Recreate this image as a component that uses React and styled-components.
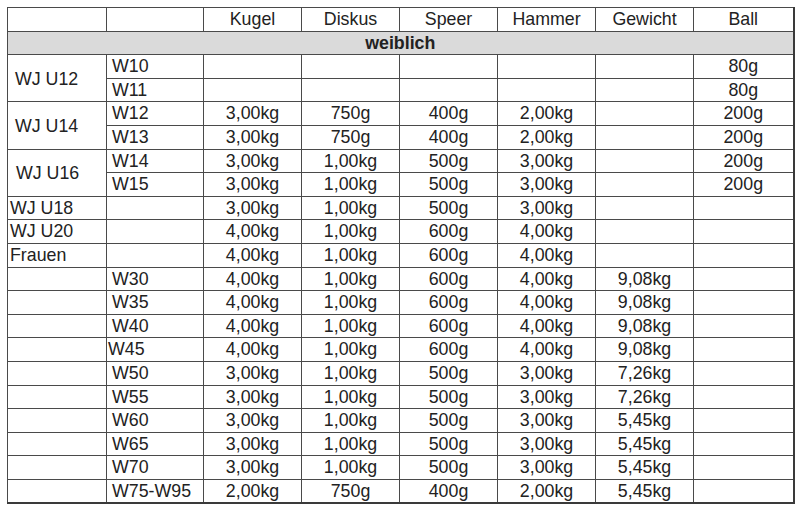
import React from "react";
import styled, { createGlobalStyle } from "styled-components";

const Global = createGlobalStyle`
  html, body { margin: 0; padding: 0; background: #fff; }
  body { padding: 7px 0 0 7px; font-family: "Liberation Sans", Arial, sans-serif; }
`;

const Table = styled.table`
  border-collapse: collapse;
  table-layout: fixed;
  width: 786px;
  color: #222;
  font-size: 17.8px;
  border-right: 2px solid #3a3a3a;
  border-bottom: 2px solid #3a3a3a;
`;

const Row = styled.tr`
  height: 23.6px;
`;

const Cell = styled.td`
  border: 1px solid #4a4a4a;
  padding: 1px 0 0 ${(p) => p.$pad ?? 0}px;
  height: 21.6px;
  line-height: 20px;
  text-align: ${(p) => (p.$left ? "left" : "center")};
  vertical-align: ${(p) => (p.$mid ? "middle" : "top")};
  white-space: nowrap;
  overflow: hidden;
`;

const Section = styled.td`
  border: 1px solid #4a4a4a;
  background: #dadada;
  font-weight: bold;
  text-align: center;
  height: 21.6px;
  line-height: 20px;
  vertical-align: top;
  padding: 1px 0 0;
`;

const widths = [99, 97, 98, 98, 98, 98, 98, 100];
const heads = ["", "", "Kugel", "Diskus", "Speer", "Hammer", "Gewicht", "Ball"];

const rows = [
  { g: "WJ U12", span: 2, gp: 7, w: "W10", v: ["", "", "", "", "", "80g"] },
  { w: "W11", v: ["", "", "", "", "", "80g"] },
  { g: "WJ U14", span: 2, gp: 7, w: "W12", v: ["3,00kg", "750g", "400g", "2,00kg", "", "200g"] },
  { w: "W13", v: ["3,00kg", "750g", "400g", "2,00kg", "", "200g"] },
  { g: "WJ U16", span: 2, gp: 8, w: "W14", v: ["3,00kg", "1,00kg", "500g", "3,00kg", "", "200g"] },
  { w: "W15", v: ["3,00kg", "1,00kg", "500g", "3,00kg", "", "200g"] },
  { g: "WJ U18", gp: 2, w: "", v: ["3,00kg", "1,00kg", "500g", "3,00kg", "", ""] },
  { g: "WJ U20", gp: 2, w: "", v: ["4,00kg", "1,00kg", "600g", "4,00kg", "", ""] },
  { g: "Frauen", gp: 2, w: "", v: ["4,00kg", "1,00kg", "600g", "4,00kg", "", ""] },
  { g: "", w: "W30", v: ["4,00kg", "1,00kg", "600g", "4,00kg", "9,08kg", ""] },
  { g: "", w: "W35", v: ["4,00kg", "1,00kg", "600g", "4,00kg", "9,08kg", ""] },
  { g: "", w: "W40", v: ["4,00kg", "1,00kg", "600g", "4,00kg", "9,08kg", ""] },
  { g: "", w: "W45", wp: 1, v: ["4,00kg", "1,00kg", "600g", "4,00kg", "9,08kg", ""] },
  { g: "", w: "W50", v: ["3,00kg", "1,00kg", "500g", "3,00kg", "7,26kg", ""] },
  { g: "", w: "W55", v: ["3,00kg", "1,00kg", "500g", "3,00kg", "7,26kg", ""] },
  { g: "", w: "W60", v: ["3,00kg", "1,00kg", "500g", "3,00kg", "5,45kg", ""] },
  { g: "", w: "W65", v: ["3,00kg", "1,00kg", "500g", "3,00kg", "5,45kg", ""] },
  { g: "", w: "W70", v: ["3,00kg", "1,00kg", "500g", "3,00kg", "5,45kg", ""] },
  { g: "", w: "W75-W95", v: ["2,00kg", "750g", "400g", "2,00kg", "5,45kg", ""] },
];

export default function App() {
  return (
    <>
      <Global />
      <Table>
        <colgroup>
          {widths.map((w, i) => (
            <col key={i} style={{ width: w }} />
          ))}
        </colgroup>
        <tbody>
          <Row>
            {heads.map((h, i) => (
              <Cell key={i}>{h}</Cell>
            ))}
          </Row>
          <Row>
            <Section colSpan={8}>weiblich</Section>
          </Row>
          {rows.map((r, i) => (
            <Row key={i}>
              {r.g !== undefined && (
                <Cell $left $mid={r.span === 2} $pad={r.gp ?? 2} rowSpan={r.span || 1}>
                  {r.g}
                </Cell>
              )}
              <Cell $left $pad={r.wp ?? 5}>{r.w}</Cell>
              {r.v.map((v, j) => (
                <Cell key={j}>{v}</Cell>
              ))}
            </Row>
          ))}
        </tbody>
      </Table>
    </>
  );
}
